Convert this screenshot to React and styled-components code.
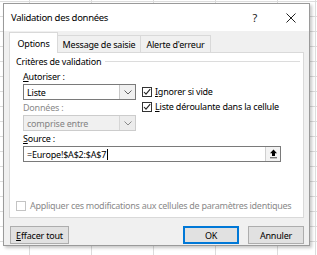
import React from 'react';
import styled, { createGlobalStyle } from 'styled-components';

const GlobalStyle = createGlobalStyle`
  html, body {
    margin: 0;
    padding: 0;
  }
  body {
    font-family: "Noto Sans", "Open Sans", sans-serif;
    background-color: #ffffff;
    background-image:
      linear-gradient(#dcdcdc 1px, transparent 1px),
      linear-gradient(90deg, #dcdcdc 1px, transparent 1px),
      linear-gradient(90deg, transparent 315px, #dcdcdc 315px, #dcdcdc 316px, transparent 316px);
    background-size: 100% 15px, 62px 100%, 100% 100%;
    background-position: 0 1px, 29px 0, 0 0;
  }
`;

const Desktop = styled.div`
  width: 317px;
  height: 255px;
  overflow: hidden;
`;

const Dialog = styled.div`
  margin: 3px 0 0 3px;
  width: 307px;
  height: 243px;
  box-sizing: border-box;
  border: 1px solid #9a9a9a;
  background: #f0f0f0;
  box-shadow: 2px 2px 3px rgba(0, 0, 0, 0.22);
  display: flex;
  flex-direction: column;
`;

const TitleBar = styled.div`
  height: 27px;
  background: #ffffff;
  display: flex;
  align-items: center;
  padding-left: 7px;
`;

const Title = styled.div`
  flex: 1;
  font-size: 9.5px;
  color: #000;
  letter-spacing: -0.3px;
`;

const TitleButton = styled.div`
  width: 36px;
  height: 27px;
  display: flex;
  align-items: center;
  justify-content: center;
  font-size: 11px;
  color: #222;
`;

const Body = styled.div`
  flex: 1;
  display: flex;
  flex-direction: column;
  padding: 1px 5px 0 5px;
`;

const TabList = styled.div`
  display: flex;
  align-items: flex-end;
  height: 21px;
  margin-bottom: -1px;
  position: relative;
  z-index: 1;
`;

const Tab = styled.div`
  box-sizing: border-box;
  height: ${p => (p.$active ? '21px' : '18px')};
  width: ${p => p.$w}px;
  margin-left: ${p => (p.$active ? '0' : '-1px')};
  border: 1px solid #d9d9d9;
  border-bottom: ${p => (p.$active ? 'none' : '1px solid #d9d9d9')};
  background: ${p => (p.$active ? '#ffffff' : '#f0f0f0')};
  font-size: 9px;
  letter-spacing: -0.2px;
  color: #000;
  display: flex;
  align-items: center;
  justify-content: center;
`;

const Panel = styled.div`
  box-sizing: border-box;
  width: 295px;
  height: 166px;
  background: #ffffff;
  border: 1px solid #d9d9d9;
  display: flex;
  flex-direction: column;
  padding: 2px 0 6px 0;
`;

const Legend = styled.div`
  display: flex;
  align-items: center;
  height: 12px;
  padding: 0 3px 0 6px;
  gap: 4px;
  font-size: 9px;
  letter-spacing: -0.2px;
  color: #000;

  &::after {
    content: '';
    flex: 1;
    height: 1px;
    background: #dcdcdc;
  }
`;

const Criteria = styled.div`
  display: flex;
  gap: 6px;
  padding-left: 13px;
  margin-top: 4px;
`;

const Column = styled.div`
  display: flex;
  flex-direction: column;
  width: ${p => (p.$w ? `${p.$w}px` : 'auto')};
  padding-top: ${p => p.$top || 0}px;
`;

const FieldLabel = styled.div`
  height: 12px;
  line-height: 12px;
  font-size: 9px;
  letter-spacing: -0.2px;
  color: ${p => (p.$disabled ? '#8a8a8a' : '#000')};
  margin-bottom: 1px;
  margin-top: ${p => p.$mt || 0}px;
`;

const Key = styled.span`
  text-decoration: underline;
  text-underline-offset: 1px;
`;

const SelectBox = styled.div`
  box-sizing: border-box;
  height: 16px;
  width: 113px;
  border: 1px solid ${p => (p.$disabled ? '#cccccc' : '#7a7a7a')};
  background: ${p => (p.$disabled ? '#f0f0f0' : '#ffffff')};
  display: flex;
  align-items: stretch;
  font-size: 9px;
  letter-spacing: -0.2px;
  color: ${p => (p.$disabled ? '#838383' : '#000')};
`;

const SelectValue = styled.div`
  flex: 1;
  display: flex;
  align-items: center;
  padding-left: 3px;
`;

const SelectArrow = styled.div`
  width: 15px;
  border-left: 1px solid ${p => (p.$disabled ? '#d6d6d6' : '#c8c8c8')};
  background: ${p => (p.$disabled ? '#ececec' : '#f0f0f0')};
  display: flex;
  align-items: center;
  justify-content: center;
`;

const CheckRow = styled.div`
  display: flex;
  align-items: center;
  gap: 3px;
  height: 15px;
  font-size: 9px;
  letter-spacing: -0.2px;
  color: ${p => (p.$disabled ? '#8a8a8a' : '#000')};
`;

const Box = styled.div`
  box-sizing: border-box;
  width: 10px;
  height: 10px;
  border: 1px solid ${p => (p.$disabled ? '#c4c4c4' : '#333333')};
  background: #ffffff;
  display: flex;
  align-items: center;
  justify-content: center;
`;

const SourceBlock = styled.div`
  padding-left: 13px;
  margin-top: 2px;
`;

const SourceInput = styled.div`
  box-sizing: border-box;
  width: 258px;
  height: 16px;
  border: 1px solid #7a7a7a;
  display: flex;
  align-items: center;
  font-size: 9px;
  letter-spacing: -0.2px;
  color: #000;
  padding-left: 3px;
`;

const SourceText = styled.div`
  flex: 1;
  display: flex;
  align-items: center;

  &::after {
    content: '';
    width: 1px;
    height: 11px;
    background: #000;
    margin-left: 1px;
  }
`;

const PickButton = styled.div`
  box-sizing: border-box;
  width: 15px;
  height: 14px;
  border-left: 1px solid #cfcfcf;
  background: #f3f3f3;
  display: flex;
  align-items: center;
  justify-content: center;
`;

const ApplyRow = styled(CheckRow)`
  margin-top: auto;
  padding-left: 6px;
  height: 11px;
  gap: 4px;
  letter-spacing: -0.28px;
`;

const Footer = styled.div`
  display: flex;
  align-items: center;
  padding: 8px 0 0 1px;
  width: 294px;
`;

const Button = styled.div`
  box-sizing: border-box;
  width: ${p => p.$w}px;
  height: 18px;
  margin-left: ${p => p.$ml || 0}px;
  background: #e1e1e1;
  border: ${p => (p.$primary ? '2px solid #0078d7' : '1px solid #adadad')};
  display: flex;
  align-items: center;
  justify-content: center;
  font-size: 9px;
  letter-spacing: -0.2px;
  color: #000;
`;

const Spacer = styled.div`
  flex: 1;
`;

const Chevron = ({ color = '#606060' }) => (
  <svg width="8" height="5" viewBox="0 0 8 5">
    <path d="M0.5 0.5 L4 4 L7.5 0.5" fill="none" stroke={color} strokeWidth="1" />
  </svg>
);

const Check = () => (
  <svg width="8" height="8" viewBox="0 0 8 8">
    <path d="M1 4 L3 6.2 L7.2 1.2" fill="none" stroke="#222" strokeWidth="1.1" />
  </svg>
);

const UploadIcon = () => (
  <svg width="9" height="10" viewBox="0 0 9 10">
    <path d="M4.5 0.5 L8 4.3 L6 4.3 L6 7 L3 7 L3 4.3 L1 4.3 Z" fill="#000" />
    <rect x="1" y="8" width="7" height="1.4" fill="#777" />
  </svg>
);

const CloseIcon = () => (
  <svg width="10" height="10" viewBox="0 0 10 10">
    <path d="M0.5 0.5 L9.5 9.5 M9.5 0.5 L0.5 9.5" stroke="#222" strokeWidth="1" />
  </svg>
);

export default function App() {
  return (
    <Desktop>
      <GlobalStyle />
      <Dialog>
        <TitleBar>
          <Title>Validation des données</Title>
          <TitleButton>?</TitleButton>
          <TitleButton>
            <CloseIcon />
          </TitleButton>
        </TitleBar>
        <Body>
          <TabList>
            <Tab $active $w={49}>Options</Tab>
            <Tab $w={84}>Message de saisie</Tab>
            <Tab $w={71}>Alerte d'erreur</Tab>
          </TabList>
          <Panel>
            <Legend>Critères de validation</Legend>
            <Criteria>
              <Column $w={113}>
                <FieldLabel>
                  <Key>A</Key>utoriser :
                </FieldLabel>
                <SelectBox>
                  <SelectValue>Liste</SelectValue>
                  <SelectArrow>
                    <Chevron />
                  </SelectArrow>
                </SelectBox>
                <FieldLabel $disabled $mt={2}>
                  Données :
                </FieldLabel>
                <SelectBox $disabled>
                  <SelectValue>comprise entre</SelectValue>
                  <SelectArrow $disabled>
                    <Chevron color="#8a8a8a" />
                  </SelectArrow>
                </SelectBox>
              </Column>
              <Column $top={13}>
                <CheckRow>
                  <Box>
                    <Check />
                  </Box>
                  <span>
                    <Key>I</Key>gnorer si vide
                  </span>
                </CheckRow>
                <CheckRow>
                  <Box>
                    <Check />
                  </Box>
                  <span>
                    <Key>L</Key>iste déroulante dans la cellule
                  </span>
                </CheckRow>
              </Column>
            </Criteria>
            <SourceBlock>
              <FieldLabel>
                <Key>S</Key>ource :
              </FieldLabel>
              <SourceInput>
                <SourceText>=Europe!$A$2:$A$7</SourceText>
                <PickButton>
                  <UploadIcon />
                </PickButton>
              </SourceInput>
            </SourceBlock>
            <ApplyRow $disabled>
              <Box $disabled />
              <span>Appliquer ces modifications aux cellules de paramètres identiques</span>
            </ApplyRow>
          </Panel>
          <Footer>
            <Button $w={59}>
              <span>
                <Key>E</Key>ffacer tout
              </span>
            </Button>
            <Spacer />
            <Button $primary $w={56}>OK</Button>
            <Button $w={56} $ml={9}>Annuler</Button>
          </Footer>
        </Body>
      </Dialog>
    </Desktop>
  );
}
